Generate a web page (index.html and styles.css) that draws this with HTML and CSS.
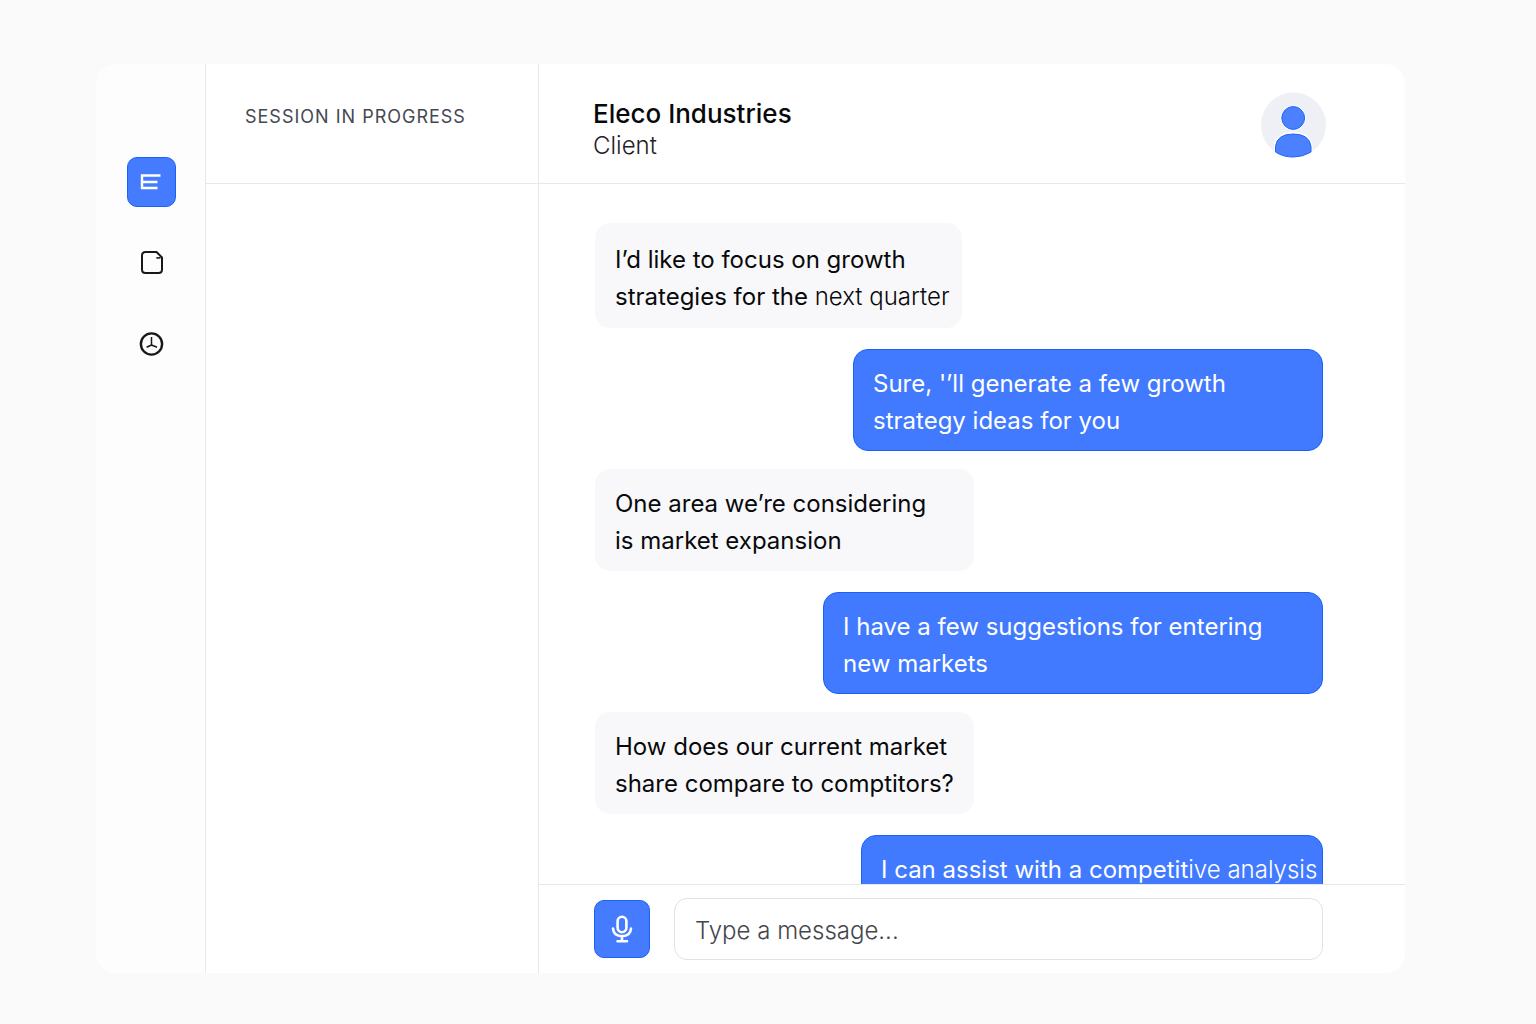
FILE: index.html
```html
<!DOCTYPE html>
<html lang="en">
<head>
<meta charset="utf-8">
<meta name="viewport" content="width=device-width, initial-scale=1">
<title>Session – Eleco Industries</title>
<link rel="stylesheet" href="styles.css">
</head>
<body>
<div class="app">
  <nav class="rail" aria-label="Main">
    <button class="rail-button rail-button--active" type="button" aria-label="Sessions">
      <svg width="48" height="48" viewBox="0 0 48 48" fill="none" stroke="#fff" stroke-width="2.400"><path d="M12.800 17.500H32.500M14 17v14M13 24H29.500M12.800 30H29.500"/></svg>
    </button>
    <button class="rail-button" type="button" aria-label="Notes">
      <svg width="48" height="48" viewBox="0 0 48 48" fill="none" stroke="#16181c" stroke-width="2"><path d="M17.500 13H28.500L34 18.500V30.500Q34 34 30.500 34H17.500Q14 34 14 30.500V16.500Q14 13 17.500 13Z" stroke-linejoin="round"/><path d="M28.300 18.900H32.500" stroke-width="1.600"/></svg>
    </button>
    <button class="rail-button" type="button" aria-label="History">
      <svg width="48" height="48" viewBox="0 0 48 48" fill="none" stroke="#16181c"><circle cx="23.500" cy="24" r="10.600" stroke-width="2.400"/><path d="M23.500 17V25M23.500 25L18.600 27.200M23.500 25L29 27.200" stroke-width="1.500"/></svg>
    </button>
  </nav>

  <aside class="sessions">
    <header class="sessions-header">
      <h2 class="sessions-title">SESSION IN PROGRESS</h2>
    </header>
  </aside>

  <main class="chat">
    <header class="chat-header">
      <div>
        <h1 class="client-name">Eleco Industries</h1>
        <p class="client-role">Client</p>
      </div>
      <svg class="avatar" width="66" height="66" viewBox="0 0 66 66" role="img" aria-label="Client avatar">
        <circle cx="32.500" cy="33" r="32.500" fill="#eff0f6"/>
        <circle cx="32.200" cy="26" r="12.600" fill="#fff"/>
        <path d="M12.800 66V54Q15 40 32.200 40Q49.500 40 51.500 54V66Z" fill="#fff"/>
        <circle cx="32.200" cy="26" r="11.400" fill="#4b80ff" stroke="#2165f5"/>
        <path d="M14.500 60V54.500Q16 42 32.200 42Q48.500 42 50 54.500V60Q42 65 32.200 65Q22 65 14.500 60Z" fill="#4b80ff" stroke="#2165f5"/>
      </svg>
    </header>

    <section class="messages" aria-label="Conversation">
      <p class="message message--lead">I’d like to focus on growth<br>strategies for the <span class="light">next quarter</span></p>
      <p class="message message--own">Sure, '’ll generate a few growth<br>strategy ideas for you</p>
      <p class="message">One area we’re considering<br>is market expansion</p>
      <p class="message message--own message--wide">I have a few suggestions for entering<br>new markets</p>
      <p class="message">How does our current market<br>share compare to comptitors?</p>
      <p class="message message--own message--fit">I can assist with a competit<span class="light">ive analysis</span></p>
    </section>

    <form class="composer">
      <button class="mic" type="button" aria-label="Record voice message">
        <svg width="28" height="32" viewBox="0 0 28 32" fill="none" stroke="#fff" stroke-width="2.600"><rect x="9.600" y="3.800" width="8.800" height="15.400" rx="4.400"/><path d="M5 15.500Q5.500 23.200 14 23.200Q22.500 23.200 23 15.500M14 23V28M9.500 28.200H19" stroke-linecap="round"/></svg>
      </button>
      <input class="composer-input" type="text" aria-label="Message" placeholder="Type a message...">
    </form>
  </main>
</div>
</body>
</html>
```

FILE: styles.css
```css
* {
  box-sizing: border-box;
}

body {
  margin: 0;
  padding: 64px 131px 51px 96px;
  background: #fafafa;
  color: #08090b;
  font-family: Inter, "Liberation Sans", sans-serif;
}

h1, h2, p {
  margin: 0;
}

button, input {
  font: inherit;
}

.app {
  display: grid;
  grid-template-columns: 110px 333px minmax(0, 1fr);
  height: calc(100vh - 115px);
  overflow: hidden;
  border-radius: 20px;
  background: #fff;
}

.rail {
  display: flex;
  flex-direction: column;
  align-items: center;
  gap: 31px;
  padding: 93px 0 0 2px;
  border-right: 1px solid #e6e8ec;
  background: #fdfdfd;
}

.rail-button {
  display: grid;
  place-items: center;
  width: 49px;
  height: 50px;
  padding: 0;
  border: 1px solid transparent;
  border-radius: 10px;
  background: none;
}

.rail-button--active {
  border-color: #1a61f8;
  background: #447bff;
}

.sessions {
  border-right: 1px solid #e6e8ec;
}

.sessions-header {
  height: 120px;
  padding: 41px 39px;
  border-bottom: 1px solid #e6e8ec;
}

.sessions-title {
  color: #454852;
  font-size: 18px;
  font-weight: 400;
  line-height: 24px;
  letter-spacing: 1px;
  white-space: nowrap;
}

.chat {
  display: flex;
  flex-direction: column;
  min-width: 0;
  min-height: 0;
}

.chat-header {
  display: flex;
  flex: none;
  justify-content: space-between;
  align-items: flex-start;
  height: 120px;
  padding: 28px 78px 0 54px;
  border-bottom: 1px solid #e6e8ec;
}

.client-name {
  padding-top: 6px;
  font-size: 26px;
  font-weight: 500;
  line-height: 32px;
}

.client-role {
  color: #1f2126;
  font-size: 24px;
  font-weight: 300;
  line-height: 32px;
}

.messages {
  display: flex;
  flex: 1;
  flex-direction: column;
  align-items: flex-start;
  min-height: 0;
  padding: 39px 82px 0 56px;
  overflow: hidden;
}

.message {
  flex: none;
  width: 379px;
  margin-bottom: 21px;
  padding: 16px 20px 12px;
  border-radius: 15px;
  background: #f8f8fa;
  font-size: 24px;
  line-height: 37px;
  white-space: nowrap;
}

.message--lead {
  width: 367px;
  padding-top: 18px;
  padding-bottom: 13px;
}

.message--own {
  align-self: flex-end;
  width: 470px;
  margin-bottom: 18px;
  padding: 15px 19px 11px;
  border: 1px solid #1a61f8;
  background: #417aff;
  color: #fff;
}

.message--wide {
  width: 500px;
}

.message--fit {
  width: 462px;
}

.light {
  font-weight: 300;
}

.composer {
  display: flex;
  flex: none;
  align-items: center;
  gap: 24px;
  height: 89px;
  padding: 0 82px 0 55px;
  border-top: 1px solid #e6e8ec;
}

.mic {
  display: grid;
  flex: none;
  place-items: center;
  width: 56px;
  height: 58px;
  padding: 0;
  border: 1px solid #1a61f8;
  border-radius: 10px;
  background: #447bff;
}

.composer-input {
  flex: 1;
  min-width: 0;
  height: 62px;
  padding: 2px 20px 0;
  border: 1px solid #dfe2e7;
  border-radius: 13px;
  background: #fff;
  font-size: 24px;
}

.composer-input::placeholder {
  color: #43464d;
  font-weight: 300;
  opacity: 1;
}
```
